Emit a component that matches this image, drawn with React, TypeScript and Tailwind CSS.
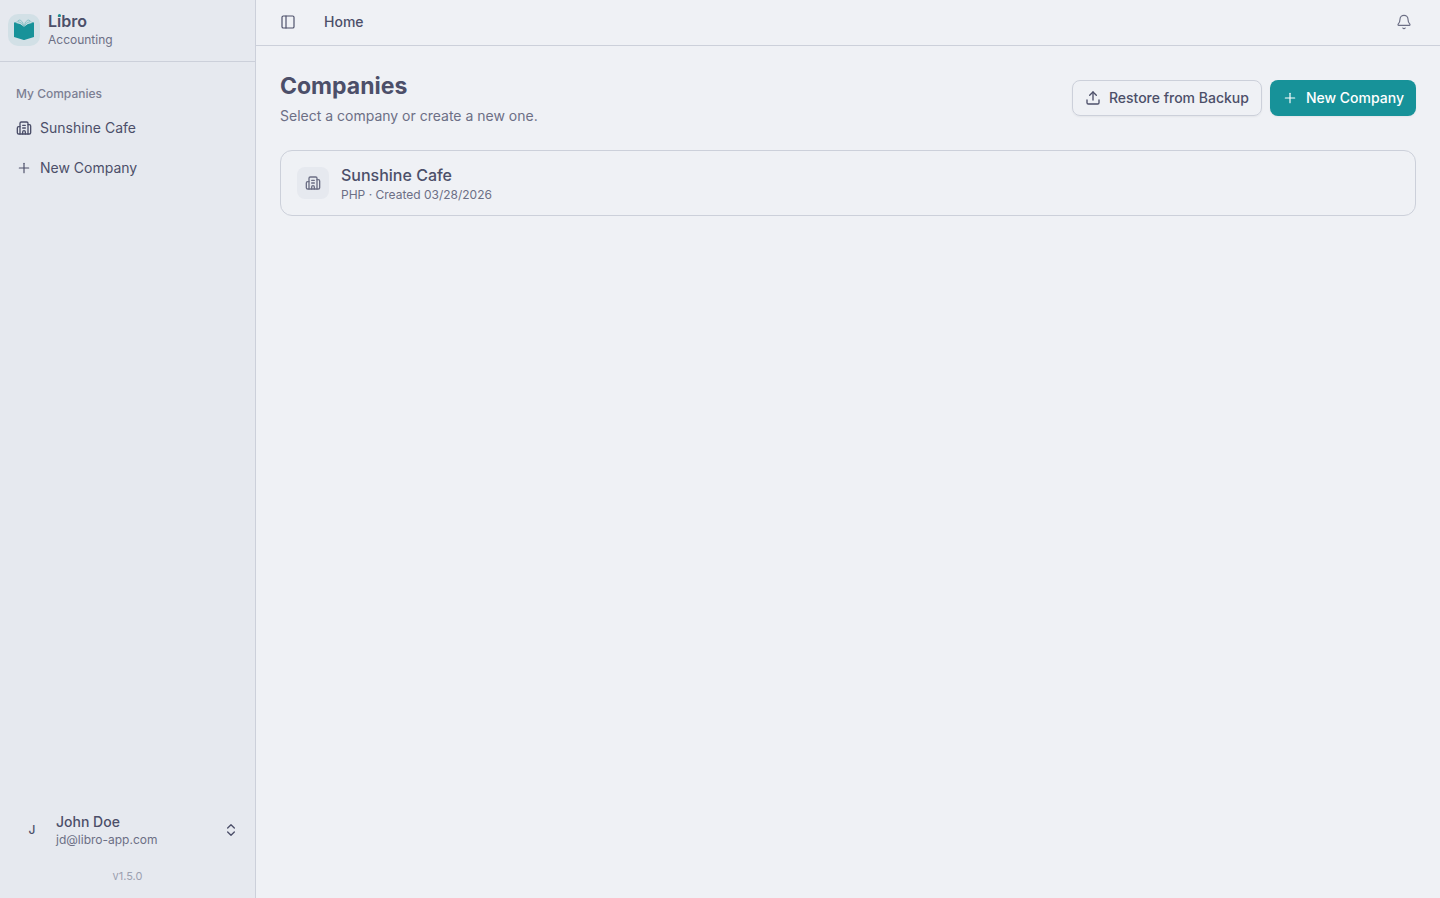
import { Bell, Building2, ChevronsUpDown, PanelLeft, Plus, Upload } from 'lucide-react';

const companies = [
  { id: 1, name: 'Sunshine Cafe', currency: 'PHP', created: '03/28/2026' },
];

function Logo() {
  return (
    <div className="flex size-8 shrink-0 items-center justify-center rounded-[10px] bg-[#d2e0e6]">
      <svg width="20" height="22" viewBox="0 0 20 22" fill="none" aria-hidden="true">
        <path d="M0 3.500 2.500 3.300Q7 4.500 10 7.500 13 4.500 17.500 3.300L20 3.500V18L11 20.800q-1 .4-2 0L0 18Z" fill="#179299" />
        <path d="M1.500 4Q3 1 6 .6 9.500 1.800 10 7.500 6 3.800 1.500 4ZM18.500 4Q17 1 14 .6 10.500 1.800 10 7.500 14 3.800 18.500 4Z" fill="#c9dde2" />
        <path d="M2 3.800Q4 1 6 .9 9 2 10 7.500 11 2 14 .9 16 1 18 3.800M4 2.600Q8 3 10 7.500 12 3 16 2.600" stroke="#6cb5bb" strokeWidth=".6" />
      </svg>
    </div>
  );
}

function Sidebar() {
  return (
    <aside className="flex w-64 shrink-0 flex-col border-r border-[#ccd0da] bg-[#e6e9ef]">
      <div className="border-b border-[#ccd0da] px-2 pt-[11px] pb-[13px]">
        <a href="#" className="flex items-center gap-2">
          <Logo />
          <div className="flex flex-col gap-px">
            <span className="text-base leading-5 font-semibold">
              L<span className="relative">i<span className="absolute top-[3px] left-px size-[3px] rounded-full bg-[#179299]" /></span>bro
            </span>
            <span className="text-xs leading-4 text-[#6c6f85]">Accounting</span>
          </div>
        </a>
      </div>

      <nav className="flex flex-1 flex-col p-2 pt-4">
        <h2 className="flex h-8 items-center px-2 text-xs font-medium text-[#7c7f93]">My Companies</h2>
        <ul className="flex flex-col gap-1">
          {companies.map((company) => (
            <li key={company.id}>
              <a href="#" className="flex h-9 items-center gap-2 rounded-md px-2 text-sm">
                <Building2 className="size-4" />
                {company.name}
              </a>
            </li>
          ))}
          <li>
            <a href="#" className="flex h-9 items-center gap-2 rounded-md px-2 text-sm">
              <Plus className="size-4" strokeWidth={1.75} />
              New Company
            </a>
          </li>
        </ul>
      </nav>

      <div className="flex flex-col gap-3 px-2 pb-3">
        <button className="flex h-12 items-center gap-2 rounded-md px-2 text-left">
          <span className="flex size-8 items-center justify-center text-xs font-medium">J</span>
          <span className="flex flex-1 flex-col">
            <span className="text-sm leading-5 font-medium">John Doe</span>
            <span className="text-xs leading-4 text-[#6c6f85]">jd@libro-app.com</span>
          </span>
          <ChevronsUpDown className="size-4" />
        </button>
        <p className="text-center text-[11px] leading-5 text-[#9ca0b0]">v1.5.0</p>
      </div>
    </aside>
  );
}

export default function App() {
  return (
    <div className="flex min-h-screen bg-[#eff1f5] font-['Inter',sans-serif] text-[#4c4f69]">
      <Sidebar />
      <div className="flex min-w-0 flex-1 flex-col">
        <header className="flex items-center justify-between border-b border-[#ccd0da] pt-2 pr-[22px] pb-[9px] pl-6">
          <div className="flex items-center gap-7">
            <button aria-label="Toggle sidebar">
              <PanelLeft className="size-4" strokeWidth={1.75} />
            </button>
            <span className="text-sm font-medium">Home</span>
          </div>
          <button aria-label="Notifications" className="flex size-7 items-center justify-center text-[#6c6f85]">
            <Bell className="size-4" strokeWidth={1.75} />
          </button>
        </header>

        <main className="flex flex-col gap-6 p-6">
          <div className="flex items-center justify-between">
            <div>
              <h1 className="text-[23px] leading-8 font-bold">Companies</h1>
              <p className="mt-1 text-sm text-[#6c6f85]">Select a company or create a new one.</p>
            </div>
            <div className="flex gap-2">
              <button className="flex h-9 items-center gap-2 rounded-lg border border-[#ccd0da] px-3 text-sm font-medium shadow-xs">
                <Upload className="size-4" />
                Restore from Backup
              </button>
              <button className="flex h-9 items-center gap-2 rounded-lg bg-[#179299] px-3 text-sm font-medium text-white shadow-xs">
                <Plus className="size-4" strokeWidth={1.75} />
                New Company
              </button>
            </div>
          </div>

          {companies.map((company) => (
            <a key={company.id} href="#" className="flex items-center gap-3 rounded-xl border border-[#ccd0da] px-4 py-3">
              <span className="flex size-8 items-center justify-center rounded-lg bg-[#e6e9ef] text-[#6c6f85]">
                <Building2 className="size-4" />
              </span>
              <span className="flex flex-col">
                <span className="text-base font-medium">{company.name}</span>
                <span className="text-xs text-[#6c6f85]">
                  {company.currency} · Created {company.created}
                </span>
              </span>
            </a>
          ))}
        </main>
      </div>
    </div>
  );
}
